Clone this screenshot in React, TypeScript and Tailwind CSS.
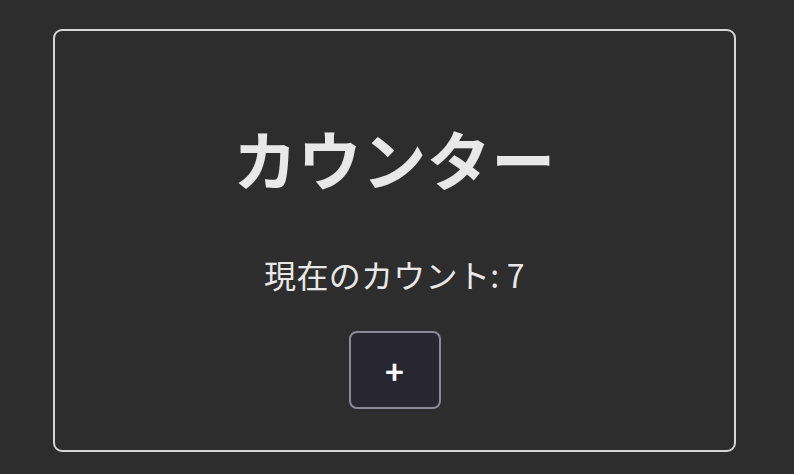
import React, { useState } from "react";

export default function App() {
  const [count, setCount] = useState(7);
  return (
    <div
      className="w-[794px] h-[474px] bg-[#2d2d2d] pt-[29px] pl-[53px] text-[#e8e8e8]"
      style={{ fontFamily: '"Noto Sans CJK JP", "Noto Sans", sans-serif' }}
    >
      <div className="w-[683px] h-[423px] border-2 border-[#d6d6d6] rounded-[9px] flex flex-col items-center pt-[94px]">
        <h1 className="text-[64px] leading-none font-bold h-[64px] tracking-[0.5px]">カウンター</h1>
        <p className="mt-[69px] text-[32px] leading-none h-[32px] tracking-[0.3px]">現在のカウント: {count}</p>
        <button
          onClick={() => setCount(count + 1)}
          className="mt-[41px] w-[92px] h-[78px] border-2 border-[#8b8997] rounded-[8px] bg-[#282631] flex items-center justify-center text-[32px] leading-none font-bold text-white"
        >
          +
        </button>
      </div>
    </div>
  );
}
